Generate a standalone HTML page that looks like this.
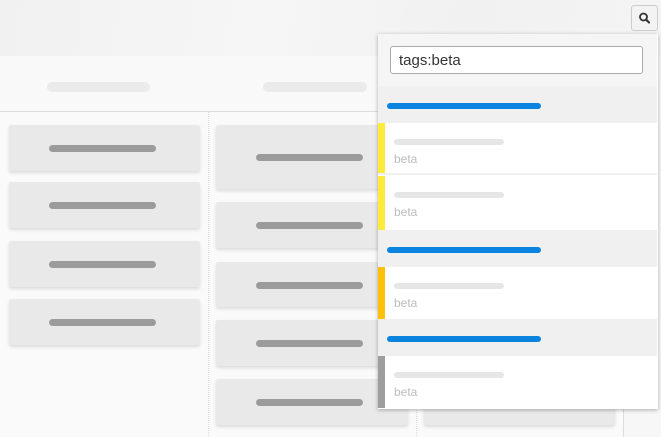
<!DOCTYPE html>
<html><head><style>
*{box-sizing:border-box;margin:0;padding:0}
body{width:661px;height:437px;overflow:hidden;background:#f7f7f7;font-family:"Liberation Sans",sans-serif;position:relative}
.abs{position:absolute}
.top{left:0;top:0;width:661px;height:56px;background:linear-gradient(100deg,#f1f1f1 0%,#f6f6f6 40%,#f1f1f1 70%,#f4f4f4 100%)}
.board{left:0;top:56px;width:624px;height:381px;background:#fafafa;border-top:1px solid #ddd}
.hdr{top:56px;height:56px;border-bottom:1px solid #ddd;border-right:1px solid #ddd;background:#f9f9f9}
.pill{height:10px;border-radius:5px;background:#ebebeb}
.card{background:#e9e9e9;border-radius:2px;box-shadow:0 2px 3px rgba(0,0,0,.12)}
.card i{position:absolute;left:40px;width:107px;height:7px;border-radius:4px;background:#9b9b9b;top:50%;margin-top:-3px}
.col{top:112px;width:1px;height:325px;border-left:1px dotted #ddd}
.dd{left:378px;top:34px;width:280px;height:375px;background:#fff;box-shadow:0 1px 4px rgba(0,0,0,.3)}
.grp{left:0;width:279px;background:#f0f0f0}
.grp b{position:absolute;left:9px;top:50%;margin-top:-2px;width:154px;height:6px;border-radius:3px;background:#0a84de}
.it{left:0;width:279px;background:#fff}
.it s{position:absolute;left:0;top:0;bottom:0;width:7px}
.it u{position:absolute;left:16px;top:16px;width:110px;height:6px;border-radius:3px;background:#e6e6e6}
.it span{position:absolute;left:16px;top:29px;font-size:12px;color:#bcbcbc}
</style></head><body>
<div class="abs top"></div>
<div class="abs board"></div>
<div class="abs hdr" style="left:0;width:209px"></div>
<div class="abs hdr" style="left:208px;width:209px"></div>
<div class="abs hdr" style="left:416px;width:208px"></div>
<div class="abs pill" style="left:47px;top:82px;width:103px"></div>
<div class="abs pill" style="left:263px;top:82px;width:104px"></div>
<div class="abs col" style="left:208px"></div>
<div class="abs col" style="left:416px"></div>
<div class="abs" style="left:623px;top:56px;width:1px;height:381px;background:#ddd"></div>
<div class="abs card" style="left:9px;top:125px;width:191px;height:46px"><i></i></div>
<div class="abs card" style="left:9px;top:182px;width:191px;height:46px"><i></i></div>
<div class="abs card" style="left:9px;top:241px;width:191px;height:46px"><i></i></div>
<div class="abs card" style="left:9px;top:299px;width:191px;height:46px"><i></i></div>
<div class="abs card" style="left:216px;top:125px;width:192px;height:64px"><i></i></div>
<div class="abs card" style="left:216px;top:202px;width:192px;height:46px"><i></i></div>
<div class="abs card" style="left:216px;top:262px;width:192px;height:45px"><i></i></div>
<div class="abs card" style="left:216px;top:320px;width:192px;height:46px"><i></i></div>
<div class="abs card" style="left:216px;top:379px;width:192px;height:46px"><i></i></div>
<div class="abs card" style="left:424px;top:379px;width:191px;height:46px"></div>
<div class="abs" style="left:631px;top:5px;width:27px;height:26px;border:1px solid #ccc;border-radius:3px;background:#f3f3f3">
<svg width="25" height="24" viewBox="0 0 25 24"><circle cx="11.5" cy="11" r="3.5" fill="none" stroke="#333" stroke-width="1.8"/><line x1="14" y1="13.5" x2="17" y2="16.5" stroke="#333" stroke-width="2.2" stroke-linecap="round"/></svg></div>
<div class="abs dd">
<div class="abs" style="left:0;top:0;width:279px;height:52px;background:#f5f5f5"></div>
<div class="abs" style="left:12px;top:12px;width:253px;height:28px;border:1px solid #aaa;border-radius:3px;background:#fff;font-size:15px;color:#333;padding:5px 8px">tags:beta</div>
<div class="abs grp" style="top:52px;height:37px"><b></b></div>
<div class="abs it" style="top:89px;height:52px;border-bottom:2px solid #f0f0f0"><s style="background:#ffeb3b"></s><u></u><span>beta</span></div>
<div class="abs it" style="top:142px;height:54px"><s style="background:#ffeb3b"></s><u></u><span>beta</span></div>
<div class="abs grp" style="top:196px;height:37px"><b></b></div>
<div class="abs it" style="top:233px;height:52px"><s style="background:#ffc107"></s><u></u><span>beta</span></div>
<div class="abs grp" style="top:285px;height:37px"><b></b></div>
<div class="abs it" style="top:322px;height:52px"><s style="background:#9e9e9e"></s><u></u><span>beta</span></div>
</div>
</body></html>
